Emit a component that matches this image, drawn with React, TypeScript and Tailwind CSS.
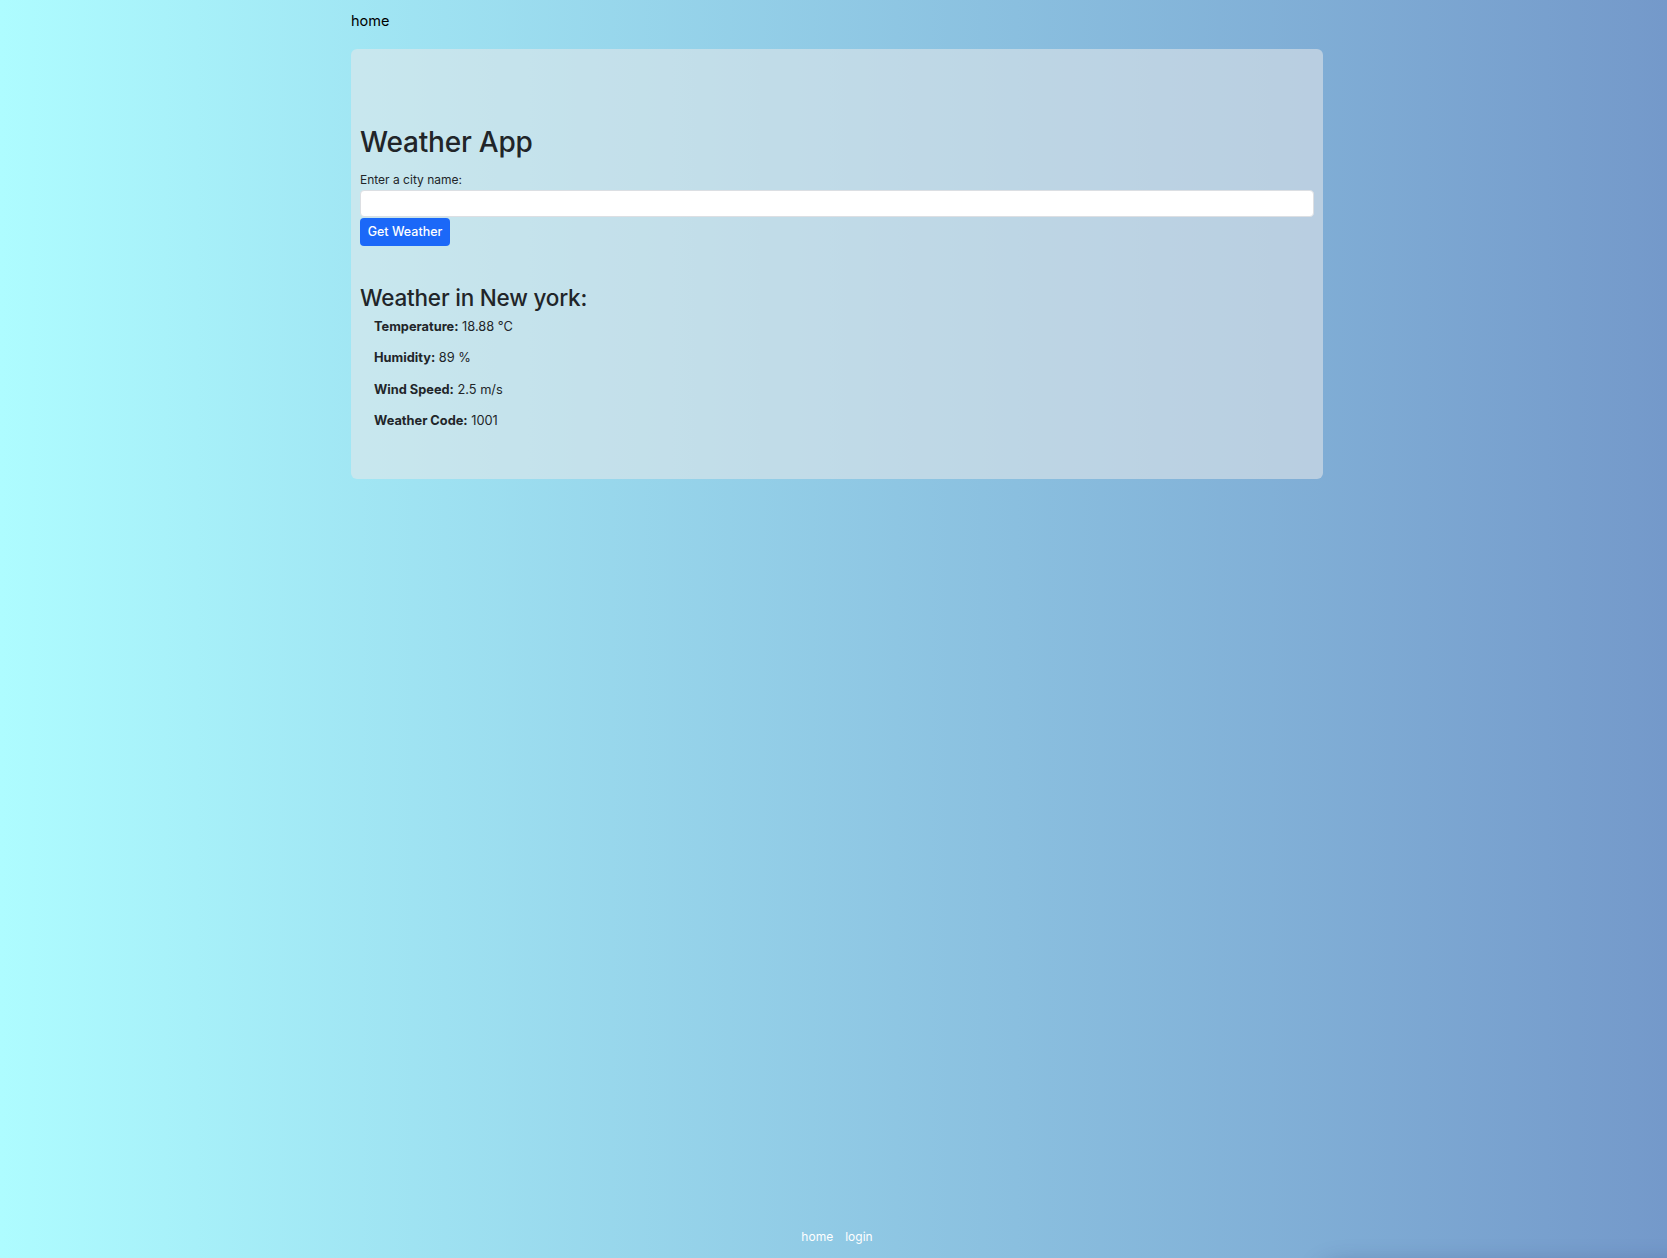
import * as React from 'react';

type Reading = {
  label: string;
  value: string;
};

const readings: readonly Reading[] = [
  { label: 'Temperature:', value: '18.88 °C' },
  { label: 'Humidity:', value: '89 %' },
  { label: 'Wind Speed:', value: '2.5 m/s' },
  { label: 'Weather Code:', value: '1001' },
];

export default function App(): React.ReactNode {
  const [city, setCity] = React.useState('');

  return (
    <div className="relative flex h-[1258px] flex-col overflow-hidden bg-gradient-to-r from-[#aefcff] to-[#7499ca] font-['Inter','Liberation_Sans',sans-serif] text-[#212529]">
      <nav className="ml-[351px] pt-[12px] text-[14.5px] leading-[18px] text-black">
        <a href="#">home</a>
      </nav>

      <main className="mt-[19px] ml-[351px] flex h-[430px] w-[972px] flex-col rounded-[6px] bg-[rgba(230,231,233,0.56)] px-[9px]">
        <h1 className="mt-[76px] text-[28px] leading-[34px] font-medium tracking-[-0.2px]">
          Weather App
        </h1>
        <label htmlFor="city" className="mt-[13px] text-[12px] leading-[15px]">
          Enter a city name:
        </label>
        <input
          id="city"
          type="text"
          value={city}
          onChange={(event) => {
            setCity(event.target.value);
          }}
          className="mt-[3px] h-[27px] w-full rounded-[4px] border border-[#dcdfe3] bg-white px-2 text-[13px] outline-none"
        />
        <button
          type="button"
          className="mt-px h-[28px] w-[90px] rounded-[4px] bg-[#1b68f8] text-[12.5px] font-medium text-white"
        >
          Get Weather
        </button>

        <h2 className="mt-[38px] text-[22.5px] leading-[28px] font-medium tracking-[-0.2px]">
          Weather in New york:
        </h2>
        <ul className="mt-[7px] flex flex-col gap-[16.4px] pl-[14px] text-[12.8px] leading-[15px]">
          {readings.map((reading) => (
            <li key={reading.label}>
              <span className="font-bold">{reading.label}</span> {reading.value}
            </li>
          ))}
        </ul>
      </main>

      <footer className="mt-auto flex justify-center gap-[12px] pb-[14px] pl-[7px] text-[12px] leading-[15px] text-white">
        <a href="#">home</a>
        <a href="#">login</a>
      </footer>

      <div className="pointer-events-none absolute top-[1266px] left-[1320px] h-[40px] w-[420px] rounded-full shadow-[0_0_24px_rgba(40,60,110,0.4)]" />
    </div>
  );
}
